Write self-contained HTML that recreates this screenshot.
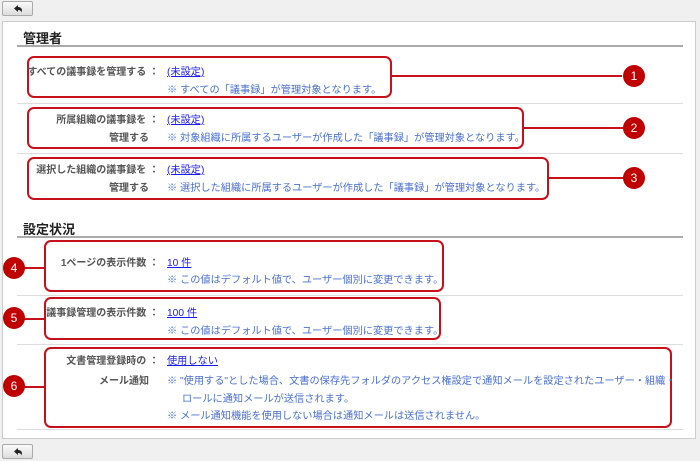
<!DOCTYPE html>
<html><head><meta charset="utf-8"><style>
*{margin:0;padding:0;box-sizing:border-box}
body{width:700px;height:461px;background:#f0f0f0;position:relative;overflow:hidden;font-family:"Liberation Sans","Noto Sans CJK JP",sans-serif;font-size:11px}
.btn{position:absolute;left:2px;width:31px;height:15px;border:1px solid #aaa;border-radius:2px;background:linear-gradient(#fafafa,#ddd)}
.panel{position:absolute;left:2px;top:21px;width:694px;height:418px;background:#fff;border:1px solid #ccc}
.h{position:absolute;left:23px;font-size:13px;font-weight:bold;color:#222}
.ul{position:absolute;left:17px;width:666px;height:2px;background:#aaa}
.sep{position:absolute;left:17px;width:666px;height:1px;background:#ddd}
.box{position:absolute;border:2px solid #c8101a;border-radius:7px}
.lbl{position:absolute;text-align:right;color:#555;font-weight:bold;font-size:10px;white-space:nowrap}
.lk{position:absolute;color:#1a1aee;text-decoration:underline;font-size:10.2px;white-space:nowrap}
.nt{position:absolute;color:#4a6fd0;font-size:10.2px;white-space:nowrap}
.c{position:absolute;width:22px;height:22px;border-radius:50%;background:#c00000;color:#fff;text-align:center;line-height:22px;font-size:12px}
.ln{position:absolute;height:2px;background:#c8101a}
</style></head><body>
<div class="btn" style="top:1px"><svg width="29" height="13"><path d="M11 6.5 L15 3 L15 5 Q19 5 19 9 L19 10.5 Q18 8 15 8 L15 10 Z" fill="#222"/></svg></div>
<div class="panel"></div>
<div class="h" style="top:28px">管理者</div>
<div class="ul" style="top:45px"></div>

<div class="box" style="left:27px;top:56px;width:365px;height:42px"></div>
<div class="lbl" style="right:541px;top:63px">すべての議事録を管理する ：</div>
<div class="lk" style="left:167px;top:63px">(未設定)</div>
<div class="nt" style="left:167px;top:81px">※ すべての「議事録」が管理対象となります。</div>
<div class="ln" style="left:392px;top:75px;width:230px"></div>
<div class="c" style="left:623px;top:65px">1</div>
<div class="sep" style="top:103px"></div>

<div class="box" style="left:27px;top:107px;width:497px;height:42px"></div>
<div class="lbl" style="right:541px;top:111px">所属組織の議事録を ：</div>
<div class="lbl" style="right:551px;top:129px">管理する</div>
<div class="lk" style="left:167px;top:111px">(未設定)</div>
<div class="nt" style="left:167px;top:129px">※ 対象組織に所属するユーザーが作成した「議事録」が管理対象となります。</div>
<div class="ln" style="left:524px;top:127px;width:100px"></div>
<div class="c" style="left:623px;top:117px">2</div>
<div class="sep" style="top:153px"></div>

<div class="box" style="left:27px;top:157px;width:522px;height:43px"></div>
<div class="lbl" style="right:541px;top:161px">選択した組織の議事録を ：</div>
<div class="lbl" style="right:551px;top:179px">管理する</div>
<div class="lk" style="left:167px;top:161px">(未設定)</div>
<div class="nt" style="left:167px;top:179px">※ 選択した組織に所属するユーザーが作成した「議事録」が管理対象となります。</div>
<div class="ln" style="left:549px;top:177px;width:75px"></div>
<div class="c" style="left:623px;top:167px">3</div>

<div class="h" style="top:219px">設定状況</div>
<div class="ul" style="top:236px"></div>

<div class="box" style="left:44px;top:240px;width:400px;height:52px"></div>
<div class="lbl" style="right:541px;top:254px">1ページの表示件数 ：</div>
<div class="lk" style="left:167px;top:254px">10 件</div>
<div class="nt" style="left:167px;top:271px">※ この値はデフォルト値で、ユーザー個別に変更できます。</div>
<div class="ln" style="left:18px;top:267px;width:27px"></div>
<div class="c" style="left:3px;top:257px">4</div>
<div class="sep" style="top:295px"></div>

<div class="box" style="left:44px;top:297px;width:397px;height:43px"></div>
<div class="lbl" style="right:541px;top:304px">議事録管理の表示件数 ：</div>
<div class="lk" style="left:167px;top:304px">100 件</div>
<div class="nt" style="left:167px;top:322px">※ この値はデフォルト値で、ユーザー個別に変更できます。</div>
<div class="ln" style="left:18px;top:318px;width:27px"></div>
<div class="c" style="left:3px;top:307px">5</div>
<div class="sep" style="top:344px"></div>

<div class="box" style="left:44px;top:347px;width:628px;height:81px"></div>
<div class="lbl" style="right:541px;top:352px">文書管理登録時の ：</div>
<div class="lbl" style="right:551px;top:372px">メール通知</div>
<div class="lk" style="left:167px;top:352px">使用しない</div>
<div class="nt" style="left:167px;top:372px;font-size:10.2px">※ "使用する"とした場合、文書の保存先フォルダのアクセス権設定で通知メールを設定されたユーザー・組織・</div>
<div class="nt" style="left:182px;top:390px">ロールに通知メールが送信されます。</div>
<div class="nt" style="left:167px;top:407px">※ メール通知機能を使用しない場合は通知メールは送信されません。</div>
<div class="ln" style="left:18px;top:386px;width:27px"></div>
<div class="c" style="left:3px;top:375px">6</div>
<div class="sep" style="top:429px"></div>

<div class="btn" style="top:444px"><svg width="29" height="13"><path d="M11 6.5 L15 3 L15 5 Q19 5 19 9 L19 10.5 Q18 8 15 8 L15 10 Z" fill="#222"/></svg></div>
</body></html>
